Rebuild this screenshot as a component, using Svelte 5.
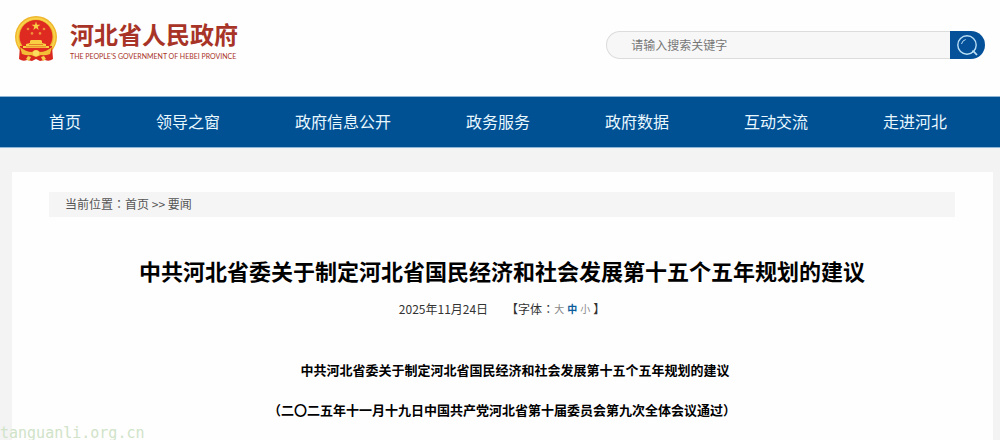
<script lang="ts">
	const navItems = ['首页', '领导之窗', '政府信息公开', '政务服务', '政府数据', '互动交流', '走进河北'];
	const sizes = ['大', '中', '小'];

	let keyword = $state('');
	let size = $state('中');
</script>

<div class="page">
	<header>
		<a class="logo" href="#home">
			<svg viewBox="0 0 44 46" width="44" height="46" aria-hidden="true">
				<circle cx="22" cy="21" r="21" fill="#efb62c" />
				<circle cx="22" cy="21" r="18.6" fill="none" stroke="#f8d24a" stroke-width="2" />
				<path d="M6 30 L38 30 L39 43 Q35 46 31 44 L26 45 L22 43 L18 45 L13 44 Q9 46 5 43Z" fill="#d9281f" />
				<circle cx="22" cy="20.5" r="16.5" fill="#de2a20" />
				<path
					d="M22 5.6 L23 8.8 L26.4 8.8 L23.7 10.8 L24.7 14 L22 12 L19.3 14 L20.3 10.8 L17.6 8.8 L21 8.8Z"
					fill="#f9cf45"
				/>
				<g fill="#f0913a">
					<circle cx="14" cy="13" r="1.3" />
					<circle cx="30" cy="13" r="1.3" />
					<circle cx="18" cy="17.4" r="1.3" />
					<circle cx="26" cy="17.4" r="1.3" />
				</g>
				<path
					d="M16 25 L17 24 L27 24 L28 25 L28 27 L32 28 L32 30 L35 30 L35 32 L9 32 L9 30 L12 30 L12 28 L16 27Z"
					fill="#f8cd42"
				/>
				<path d="M15 28.5H29M12 30.8H32" stroke="#e26a25" stroke-width="0.8" />
				<path d="M6 31 Q12 36 18 36 Q22 32 26 36 Q32 36 38 31 L36 38 Q31 40 27 39 L22 41 L17 39 Q13 40 8 38Z" fill="#f3bd36" />
				<circle cx="22" cy="37.2" r="3" fill="#fbdc60" />
				<path d="M14 40 L17 41 L15 45 L12 43Z M30 40 L27 41 L29 45 L32 43Z" fill="#f7d04b" />
			</svg>
			<span class="names">
				<span class="cn">河北省人民政府</span>
				<span class="en">THE PEOPLE'S GOVERNMENT OF HEBEI PROVINCE</span>
			</span>
		</a>
		<form class="search" role="search" onsubmit={(e) => e.preventDefault()}>
			<input type="text" aria-label="搜索" placeholder="请输入搜索关键字" bind:value={keyword} />
			<button type="submit" aria-label="搜索">
				<svg viewBox="0 0 22 22" width="22" height="22" fill="none" stroke="#b9def5" aria-hidden="true">
					<circle cx="10" cy="11" r="9.2" stroke-width="1.4" />
					<path d="M4.5 10 A6 6 0 0 1 8.7 5.5" stroke-width="1" />
					<path d="M15 17.4 L16.6 17.4 L20 21" stroke-width="1.8" />
				</svg>
			</button>
		</form>
	</header>

	<nav>
		{#each navItems as item}
			<a href="#{item}">{item}</a>
		{/each}
	</nav>

	<main>
		<div class="crumbs">
			当前位置<span class="colon">：</span><a href="#home">首页</a> &gt;&gt; <a href="#news">要闻</a>
		</div>
		<article>
			<h1>中共河北省委关于制定河北省国民经济和社会发展第十五个五年规划的建议</h1>
			<div class="meta">
				<time datetime="2025-11-24">2025年11月24日</time>
				<div class="sizes">
					<span>【字体<span class="colon">：</span></span>
					{#each sizes as s}
						<button type="button" class:active={size === s} onclick={() => (size = s)}>{s}</button>
					{/each}
					<span>】</span>
				</div>
			</div>
			<p class="indent">中共河北省委关于制定河北省国民经济和社会发展第十五个五年规划的建议</p>
			<p>（二〇二五年十一月十九日中国共产党河北省第十届委员会第九次全体会议通过）</p>
		</article>
	</main>

	<div class="watermark">tanguanli.org.cn</div>
</div>

<style>
	:global(body) {
		margin: 0;
	}
	.page {
		position: relative;
		display: flex;
		flex-direction: column;
		box-sizing: border-box;
		min-height: 100vh;
		background: #f3f3f3;
		color: #000;
		font-family: 'Noto Sans CJK SC', sans-serif;
		font-size: 12px;
		line-height: 18px;
	}
	a {
		color: inherit;
		text-decoration: none;
	}
	header {
		display: flex;
		justify-content: space-between;
		align-items: flex-start;
		height: 80px;
		padding: 16px 15px 0 14px;
		background: #fefefe;
	}
	.logo {
		display: flex;
		gap: 12px;
	}
	.names {
		display: flex;
		flex-direction: column;
		padding-top: 4px;
		color: #a83428;
		white-space: nowrap;
	}
	.cn {
		font-size: 24px;
		font-weight: 700;
		line-height: 28px;
	}
	.en {
		font-family: Lato, sans-serif;
		font-size: 7px;
		line-height: 16px;
	}
	.search {
		display: flex;
		width: 39%;
		height: 28px;
		margin-top: 15px;
	}
	.search input {
		flex: 1;
		min-width: 0;
		box-sizing: border-box;
		padding: 0 24px;
		border: 1px solid #dcdcdc;
		border-right: 0;
		border-radius: 14px 0 0 14px;
		background: #f7f7f7;
		color: #555;
		font: inherit;
		outline: none;
	}
	.search input::placeholder {
		color: #777;
		opacity: 1;
	}
	.search button {
		display: grid;
		place-items: center;
		width: 35px;
		padding: 0;
		border: 0;
		border-radius: 0 14px 14px 0;
		background: #04519a;
		cursor: pointer;
	}
	nav {
		display: flex;
		justify-content: space-between;
		padding: 0 53px 1px 49px;
		border-top: 1px solid #8fb6d6;
		border-bottom: 1px solid #8fb6d6;
		background: #005094;
		color: #e9f8ff;
		font-size: 16px;
		line-height: 49px;
		white-space: nowrap;
	}
	main {
		flex: 1;
		margin: 24px 7px 0 12px;
		padding: 20px 38px 0 37px;
		background: #fefefe;
	}
	.crumbs {
		padding: 3px 16px 4px;
		background: #f5f5f5;
		color: #555;
	}
	/* the TC face centres the full-width colon */
	.colon {
		font-family: 'Noto Sans CJK TC', sans-serif;
	}
	article {
		text-align: center;
	}
	h1 {
		margin: 37px 0 0;
		font-size: 22px;
		font-weight: 700;
		line-height: 32px;
	}
	.meta {
		display: flex;
		justify-content: center;
		gap: 18px;
		margin: 14px 0 42px;
		color: #333;
	}
	.sizes {
		display: flex;
		align-items: center;
	}
	.sizes button {
		padding: 0;
		margin-right: 3px;
		border: 0;
		background: none;
		color: #888;
		font: inherit;
		font-size: 10px;
		line-height: 18px;
		cursor: pointer;
	}
	.sizes button.active {
		color: #0a5c9c;
		font-weight: 700;
	}
	p {
		margin: 0 0 20px;
		font-size: 13px;
		font-weight: 700;
		line-height: 20px;
	}
	p:last-child {
		margin-bottom: 0;
	}
	.indent {
		text-indent: 2em;
	}
	.watermark {
		position: absolute;
		left: 0;
		bottom: 0;
		color: #d0e3c8;
		font-family: 'DejaVu Sans Mono', monospace;
		font-size: 15px;
		line-height: 14px;
		pointer-events: none;
	}
</style>
